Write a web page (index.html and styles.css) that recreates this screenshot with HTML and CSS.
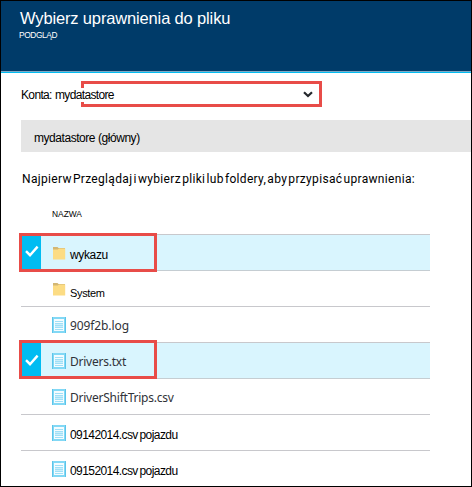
FILE: index.html
```
<!DOCTYPE html>
<html lang="pl">
<head>
<meta charset="utf-8">
<title>Wybierz uprawnienia do pliku</title>
<link rel="stylesheet" href="styles.css">
</head>
<body>
<svg class="defs" width="0" height="0" aria-hidden="true">
  <symbol id="folder" viewBox="0 0 13 13">
    <path d="M0 0h4.5l1 1H12v2H0z" fill="#d3b774"/>
    <path d="M0 2.6h4.8L6 1.6h6.2V12.4H0z" fill="#fcdc84"/>
  </symbol>
  <symbol id="file" viewBox="0 0 14 16">
    <path d="M1 1h12v14H1z" fill="#f4fcff" stroke="#82d8f5" stroke-width="2"/>
    <path d="M13.5 0v16M.5 0v16" stroke="#5cc5ea"/>
    <path d="M3 6h8v5H3z" fill="#cbeefb"/>
    <path d="M3 4.5h8M3 6.5h8M3 8.5h8M3 10.5h8M3 12.5h8" stroke="#9fe0f7"/>
  </symbol>
  <symbol id="check" viewBox="0 0 14 12">
    <path d="M1 6.2L5 10.2L12.6 1.6" fill="none" stroke="#fff" stroke-width="2.4"/>
  </symbol>
</svg>
<div class="blade">
  <header class="header">
    <h1 class="title">Wybierz uprawnienia do pliku</h1>
    <div class="subtitle">PODGLĄD</div>
  </header>
  <div class="account">
    <span class="account-label">Konta: mydatastore</span>
    <div class="account-frame"></div>
    <svg class="chevron" viewBox="0 0 10 7"><path d="M1 1.2L5 5L9 1.2" fill="none" stroke="#25282d" stroke-width="2.2"/></svg>
  </div>
  <div class="crumb"><span>mydatastore (główny)</span></div>
  <p class="hint">Najpierw Przeglądaj i wybierz pliki lub foldery, aby przypisać uprawnienia:</p>
  <div class="column"><span>NAZWA</span></div>
  <ul class="list">
    <li class="row selected"><div class="tick"><svg><use href="#check"/></svg></div><svg class="folder"><use href="#folder"/></svg><span class="name wykazu">wykazu</span></li>
    <li class="row"><div class="tick"></div><svg class="folder"><use href="#folder"/></svg><span class="name system">System</span></li>
    <li class="row"><div class="tick"></div><svg class="file"><use href="#file"/></svg><span class="name segoe log">909f2b.log</span></li>
    <li class="row selected second"><div class="tick"><svg><use href="#check"/></svg></div><svg class="file"><use href="#file"/></svg><span class="name segoe drivers">Drivers.txt</span></li>
    <li class="row"><div class="tick"></div><svg class="file"><use href="#file"/></svg><span class="name segoe trips">DriverShiftTrips.csv</span></li>
    <li class="row"><div class="tick"></div><svg class="file"><use href="#file"/></svg><span class="name vehicle">09142014.csv pojazdu</span></li>
    <li class="row"><div class="tick"></div><svg class="file"><use href="#file"/></svg><span class="name vehicle">09152014.csv pojazdu</span></li>
  </ul>
</div>
</body>
</html>
```
FILE: styles.css
```
*, *::after { box-sizing: border-box; }
body { margin: 0; font-family: "Liberation Sans", Arial, sans-serif; color: #000; }
.defs { display: block; }
.blade { width: 472px; height: 487px; border: 1px solid #000; background: #fff; overflow: hidden; }
.header { height: 72px; padding: 7px 0 0 19px; background: #003b69; border-bottom: 1px solid #00bcf2; box-shadow: inset 0 -1px #7fa9c4; color: #fff; }
.title { margin: 0; font-size: 16.5px; line-height: 20px; font-weight: 400; letter-spacing: -0.15px; white-space: nowrap; }
.subtitle { margin-top: 2px; font-size: 8.4px; line-height: 10px; letter-spacing: -0.4px; margin-left: -1px; }
.account { position: relative; height: 47px; padding: 15px 0 0 20px; font-size: 12px; line-height: 14px; }
.account-label { position: relative; z-index: 1; display: inline-block; background: #fff; letter-spacing: -0.65px; word-spacing: 0.5px; white-space: nowrap; }
.account-frame { position: absolute; left: 80px; top: 8px; width: 241px; height: 26px; border: 3px solid #e84c48; }
.chevron { position: absolute; left: 302px; top: 18px; width: 10px; height: 7px; }
.crumb { height: 32px; margin-left: 20px; padding-left: 13px; background: #e5e5e5; font-size: 12px; line-height: 36px; letter-spacing: -0.45px; }
.hint { margin: 19px 0 0 21px; font-family: Roboto, sans-serif; font-size: 12px; line-height: 16px; white-space: nowrap; letter-spacing: 0.32px; word-spacing: -2.1px; }
.column { height: 47px; padding: 21px 0 0 51px; font-size: 8.4px; line-height: 12px; }
.list { margin: 0 0 0 20px; padding: 0; width: 409px; list-style: none; }
.row { position: relative; display: flex; height: 36px; border-top: 1px solid #c8c8cc; }
.row:nth-child(2), .row:nth-child(5) { border-top-color: #c5cdd2; }
.tick { width: 20px; flex: none; padding: 10px 0 0 4px; }
.tick svg { display: block; width: 14px; height: 12px; }
.selected { background: #d9f5fe; }
.selected .tick { background: #00bcf2; }
.selected::after { content: ""; position: absolute; left: -2px; top: -2px; width: 138px; height: 39px; border: 3px solid #e84c48; z-index: 2; }
.second::after { top: -3px; }
.folder { width: 13px; height: 13px; margin: 12px 4px 0 12px; }
.file { width: 14px; height: 16px; margin: 10px 4px 0 11px; }
.name { font-size: 12px; line-height: 18px; margin-top: 11px; white-space: nowrap; }
.wykazu { letter-spacing: -0.35px; }
.system { font-size: 11px; letter-spacing: -0.35px; margin-top: 13px; }
.segoe { font-family: "Noto Sans", sans-serif; color: #303238; margin-top: 10px; }
.log { letter-spacing: -0.1px; }
.drivers, .trips { letter-spacing: -0.23px; }
.vehicle { letter-spacing: -0.58px; word-spacing: -1px; }
.second .tick { padding-top: 11px; }
```
